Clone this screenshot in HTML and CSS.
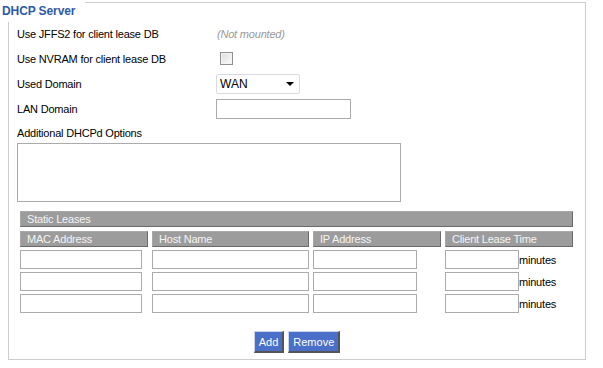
FILE: index.html
```html
<!DOCTYPE html>
<html lang="en">
<head>
  <meta charset="UTF-8" />
  <title>DHCP Server</title>
  <link rel="stylesheet" href="styles.css">
</head>
<body>
  <div class="panel">
    <div class="panel-title">DHCP Server</div>

    <div class="setting">
      <span class="label">Use JFFS2 for client lease DB</span>
      <span class="note">(Not mounted)</span>
    </div>
    <div class="setting">
      <span class="label">Use NVRAM for client lease DB</span>
      <input type="checkbox" class="check">
    </div>
    <div class="setting">
      <span class="label">Used Domain</span>
      <span class="select-wrap">
        <select class="select"><option>WAN</option><option>LAN &amp; WLAN</option></select>
      </span>
    </div>
    <div class="setting">
      <span class="label">LAN Domain</span>
      <input type="text" class="text">
    </div>

    <div class="block-label">Additional DHCPd Options</div>
    <textarea class="options"></textarea>

    <div class="leases">
      <div class="leases-title">Static Leases</div>
      <div class="col-head">MAC Address</div>
      <div class="col-head">Host Name</div>
      <div class="col-head">IP Address</div>
      <div class="col-head">Client Lease Time</div>

      <div class="cell"><input type="text" class="mac"></div>
      <div class="cell"><input type="text" class="host"></div>
      <div class="cell"><input type="text" class="ip"></div>
      <div class="cell"><input type="text" class="time"><span>minutes</span></div>

      <div class="cell"><input type="text" class="mac"></div>
      <div class="cell"><input type="text" class="host"></div>
      <div class="cell"><input type="text" class="ip"></div>
      <div class="cell"><input type="text" class="time"><span>minutes</span></div>

      <div class="cell"><input type="text" class="mac"></div>
      <div class="cell"><input type="text" class="host"></div>
      <div class="cell"><input type="text" class="ip"></div>
      <div class="cell"><input type="text" class="time"><span>minutes</span></div>
    </div>

    <div class="buttons">
      <button type="button" class="btn">Add</button>
      <button type="button" class="btn">Remove</button>
    </div>
  </div>
</body>
</html>
```

FILE: styles.css
```css
*, *::before, *::after { box-sizing: border-box; }
body {
  margin: 0;
  background: #fff;
  color: #000;
  font-family: "Liberation Sans", Arial, sans-serif;
  font-size: 11px;
  letter-spacing: -0.2px;
}

/* fieldset-like frame */
.panel {
  position: relative;
  margin: 2px 0 0 8px;
  width: 578px; height: 358px;
  border: 1px solid #ccc;
  padding: 18px 0 0 8px;
}
.panel-title {
  position: absolute; left: -7px; top: -3px;
  padding: 4px 10px 3px 0;
  background: #fff;
  color: #2c5aa8;
  font-weight: bold; font-size: 12px;
  letter-spacing: -0.1px;
  line-height: 15px;
}

/* settings */
.setting { display: flex; align-items: center; height: 25px; }
.label { width: 199px; flex: none; }
.note { margin-left: 1px; color: #999; font-style: italic; }

.check {
  appearance: none; margin: 0 0 0 4px;
  width: 13px; height: 13px;
  border: 1px solid #8e8f8f;
  background: linear-gradient(135deg, #dcdcdc, #fbfbfb);
  box-shadow: inset 0 0 0 1px #f4f4f4;
}

.select-wrap { position: relative; display: inline-block; }
.select {
  appearance: none;
  width: 84px; height: 20px; margin: 0;
  padding: 0 0 0 3px;
  border: 1px solid #d9dbe4; border-radius: 2px;
  background: #fff; color: #000;
  font-family: inherit; font-size: 12px;
}
.select-wrap::after {
  content: ''; position: absolute;
  right: 6px; top: 8px;
  border-left: 4px solid transparent;
  border-right: 4px solid transparent;
  border-top: 4px solid #000;
  pointer-events: none;
}

input[type="text"], textarea {
  margin: 0; padding: 1px 3px;
  border: 1px solid #ababab;
  background: #fff;
  font-family: inherit; font-size: 11px;
}
.text { width: 135px; height: 20px; }

.block-label { height: 22px; padding-top: 4px; line-height: 16px; }
.options { display: block; width: 384px; height: 59px; resize: none; }

/* static leases */
.leases {
  display: grid;
  grid-template-columns: 128px 157px 128px 128px;
  column-gap: 4px;
  margin: 9px 0 0 3px;
  width: 553px;
}
.leases-title, .col-head {
  height: 16px; line-height: 14px;
  padding-left: 6px;
  background: #9c9c9c;
  color: #f4f4f4;
  border: 1px solid #a8a8a8;
  border-right-color: #6a6a6a; border-bottom-color: #6a6a6a;
}
.leases-title { grid-column: 1 / -1; margin-bottom: 4px; }
.col-head { margin-bottom: 3px; }
.cell { display: flex; align-items: center; height: 19px; margin-bottom: 3px; }
.cell input { height: 19px; }
.mac { width: 122px; }
.host { width: 157px; }
.ip { width: 104px; }
.time { width: 74px; }

/* buttons */
.buttons { display: flex; justify-content: center; gap: 4px; margin-top: 15px; padding-right: 8px; }
.btn {
  height: 22px; padding: 0 4px;
  background: #4a6fc8; color: #fff;
  font-family: inherit; font-size: 11px;
  border: 1px solid;
  border-width: 1px 2px 2px 1px;
  border-color: #c9d4f0 #555 #555 #c9d4f0;
  cursor: pointer;
}
```
